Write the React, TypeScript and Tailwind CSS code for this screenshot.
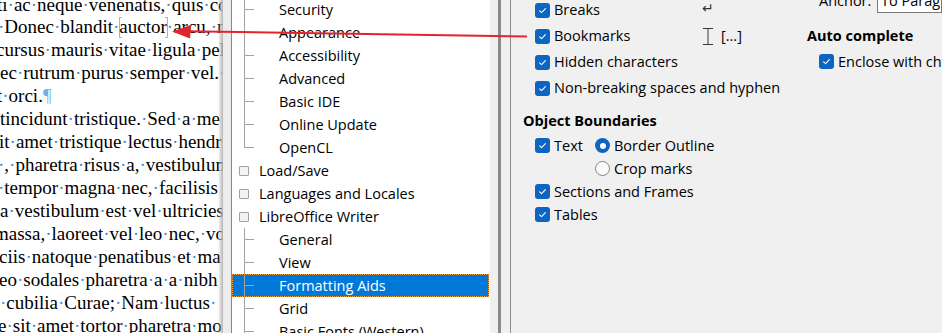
import React from "react";

function Words({ s }: { s: string }) {
  const parts = s.split(" ");
  return (
    <>
      {parts.map((p, i) => (
        <React.Fragment key={i}>
          {i > 0 && <span className="text-[#3f8fd8]">·</span>}
          {p}
        </React.Fragment>
      ))}
    </>
  );
}

const docLines: { t: string; c: string }[] = [
  { t: "ti ac neque venenatis, quis co", c: "-ml-[3px]" },
  { t: "", c: "" },
  { t: "cursus mauris vitae ligula pel", c: "-ml-[4px]" },
  { t: "ec rutrum purus semper vel. ", c: "ml-0" },
  { t: "", c: "" },
  { t: "tincidunt tristique. Sed a me", c: "ml-0" },
  { t: "it amet tristique lectus hendr", c: "-ml-[1px]" },
  { t: " , pharetra risus a, vestibulum", c: "-ml-[2px]" },
  { t: " tempor magna nec, facilisis", c: "-ml-[2px]" },
  { t: "a vestibulum est vel ultricies", c: "ml-0" },
  { t: "massa, laoreet vel leo nec, vo", c: "-ml-[6px]" },
  { t: "ciis natoque penatibus et ma", c: "-ml-[1px]" },
  { t: "eo sodales pharetra a a nibh", c: "-ml-[1px]" },
  { t: " cubilia Curae; Nam luctus ", c: "ml-0" },
  { t: "e sit amet tortor pharetra mo", c: "-ml-[2px]" },
];

function Check() {
  return (
    <span className="inline-flex w-[15px] h-[15px] shrink-0 items-center justify-center rounded-[3px] bg-[#0d65c2]">
      <svg width="15" height="15" viewBox="0 0 15 15">
        <path d="M4.6 7.8 L6.6 9.6 L10.4 5.6" fill="none" stroke="#ffffff" strokeWidth="1.1" strokeLinecap="round" strokeLinejoin="round" />
      </svg>
    </span>
  );
}

function Radio({ on }: { on: boolean }) {
  return on ? (
    <span className="inline-flex w-[15px] h-[15px] shrink-0 items-center justify-center rounded-full bg-[#0d65c2]">
      <span className="w-[6px] h-[6px] rounded-full bg-white" />
    </span>
  ) : (
    <span className="inline-block w-[15px] h-[15px] shrink-0 rounded-full border border-[#858585] bg-[#fbfbfb]" />
  );
}

type TreeRow = { label: string; top?: boolean; last?: boolean; sel?: boolean };
const tree: TreeRow[] = [
  { label: "Security" },
  { label: "Appearance" },
  { label: "Accessibility" },
  { label: "Advanced" },
  { label: "Basic IDE" },
  { label: "Online Update" },
  { label: "OpenCL", last: true },
  { label: "Load/Save", top: true },
  { label: "Languages and Locales", top: true },
  { label: "LibreOffice Writer", top: true },
  { label: "General" },
  { label: "View" },
  { label: "Formatting Aids", sel: true },
  { label: "Grid" },
  { label: "Basic Fonts (Western)" },
];

export default function App() {
  return (
    <div className="relative flex w-[942px] h-[333px] overflow-hidden bg-[#f0f0f0] text-black font-['Open_Sans',sans-serif] text-[14.5px]">
      {/* document */}
      <div className="relative w-[223px] shrink-0 bg-white overflow-hidden font-['Liberation_Serif',serif] text-[19px] leading-[22.93px] text-black">
        <div className="-mt-[6.5px]">
          {docLines.map((l, i) => {
            if (i === 1) {
              return (
                <div key={i} className="whitespace-nowrap -ml-[2px]">
                  <Words s=" Donec blandit " />
                  <span className="inline-block w-[3px] h-[21px] -mr-[3px] border-l border-y border-[#a9b0c0] align-[-5px]" />
                  auctor
                  <span className="inline-block w-[3px] h-[21px] -ml-[2px] -mr-[1px] border-r border-y border-[#a9b0c0] align-[-5px]" />
                  <Words s=" arcu, n" />
                </div>
              );
            }
            if (i === 4) {
              return (
                <div key={i} className="whitespace-nowrap -ml-[3px]">
                  <Words s="t orci." />
                  <span className="text-[#6fb0e6]">¶</span>
                </div>
              );
            }
            return (
              <div key={i} className={"whitespace-nowrap " + l.c}>
                <Words s={l.t} />
              </div>
            );
          })}
        </div>
        <div className="absolute top-0 right-0 h-full w-[5px] bg-gradient-to-r from-transparent to-[#b4b4b4]" />
      </div>
      <div className="w-[8px] shrink-0 bg-[#ececec]" />

      {/* tree list */}
      <div className="w-[259px] shrink-0 border-l border-[#828790] bg-white overflow-hidden">
        <div className="-mt-[2px]">
          {tree.map((r, i) =>
            r.top ? (
              <div key={i} className="h-[23px] flex items-center whitespace-nowrap">
                <span className="ml-[7px] w-[10px] h-[10px] shrink-0 border border-[#a2a2a2] bg-[#f3f3f3] rounded-[1px]" />
                <span className="ml-[10px]">{r.label}</span>
              </div>
            ) : (
              <div
                key={i}
                className={
                  r.sel
                    ? "h-[23px] flex items-center whitespace-nowrap bg-[#0078d7] text-white outline outline-1 outline-dotted outline-[#e9a045] -outline-offset-1 mr-[1px]"
                    : "h-[23px] flex items-center whitespace-nowrap"
                }
              >
                <div className="ml-[12px] w-[10px] h-full shrink-0 flex flex-col">
                  <div className="h-[12px] border-l border-b border-[#a3a3a3]" />
                  <div className={r.last ? "flex-1" : "flex-1 border-l border-[#a3a3a3]"} />
                </div>
                <span className="ml-[25px]">{r.label}</span>
              </div>
            )
          )}
        </div>
      </div>

      <div className="w-[8px] shrink-0" />
      <div className="w-[3px] shrink-0 bg-[#8a8a8a]" />
      <div className="w-[9px] shrink-0" />
      <div className="w-px shrink-0 bg-[#8e8e96]" />

      {/* right panel */}
      <div className="flex-1 flex min-w-0">
        <div className="w-[296px] shrink-0 pl-[12px]">
          <div className="-mt-[3px] pl-[12px]">
            <div className="h-[26px] flex items-center whitespace-nowrap">
              <Check />
              <span className="ml-[4px] w-[148px]">Breaks</span>
              <span className="font-['DejaVu_Sans',sans-serif] text-[14px] text-[#333] -mt-[4px]">↵</span>
            </div>
            <div className="h-[26px] flex items-center whitespace-nowrap">
              <Check />
              <span className="ml-[4px] w-[148px]">Bookmarks</span>
              <svg width="12" height="17" viewBox="0 0 12 17" className="shrink-0">
                <path d="M1 0.5 H11 M6 0.5 V16.5 M1 16.5 H11" fill="none" stroke="#3a3a3a" strokeWidth="1" />
              </svg>
              <span className="ml-[7px]">[...]</span>
            </div>
            <div className="h-[26px] flex items-center whitespace-nowrap">
              <Check />
              <span className="ml-[4px]">Hidden characters</span>
            </div>
            <div className="h-[26px] flex items-center whitespace-nowrap">
              <Check />
              <span className="ml-[4px]">Non-breaking spaces and hyphen</span>
            </div>
          </div>
          <div className="mt-[8px] h-[23px] flex items-center font-bold whitespace-nowrap">Object Boundaries</div>
          <div className="mt-[2px] pl-[12px]">
            <div className="h-[23px] flex items-center whitespace-nowrap">
              <Check />
              <span className="ml-[4px] w-[41px]">Text</span>
              <Radio on={true} />
              <span className="ml-[4px]">Border Outline</span>
            </div>
            <div className="h-[23px] flex items-center whitespace-nowrap">
              <span className="ml-[60px]" />
              <Radio on={false} />
              <span className="ml-[4px]">Crop marks</span>
            </div>
            <div className="h-[23px] flex items-center whitespace-nowrap">
              <Check />
              <span className="ml-[4px]">Sections and Frames</span>
            </div>
            <div className="h-[23px] flex items-center whitespace-nowrap">
              <Check />
              <span className="ml-[4px]">Tables</span>
            </div>
          </div>
        </div>

        <div className="flex-1 min-w-0">
          <div className="-mt-[12px] h-[25px] flex items-center pl-[12px] whitespace-nowrap">
            <span className="w-[58px] shrink-0">Anchor:</span>
            <div className="flex-1 h-full border border-[#7a7a7a] bg-white pl-[3px] flex items-center overflow-hidden">To Paragraph</div>
          </div>
          <div className="mt-[11px] h-[23px] flex items-center font-bold whitespace-nowrap">Auto complete</div>
          <div className="mt-[3px] h-[23px] flex items-center pl-[12px] whitespace-nowrap">
            <Check />
            <span className="ml-[4px]">Enclose with characters</span>
          </div>
        </div>
      </div>

      {/* red annotation arrow */}
      <svg className="absolute inset-0 pointer-events-none" width="942" height="333" viewBox="0 0 942 333">
        <line x1="527" y1="36.5" x2="188" y2="31.2" stroke="#e4242c" strokeWidth="2" />
        <polygon points="172,31.5 191,25 190,38.5" fill="#e4242c" />
      </svg>
    </div>
  );
}
